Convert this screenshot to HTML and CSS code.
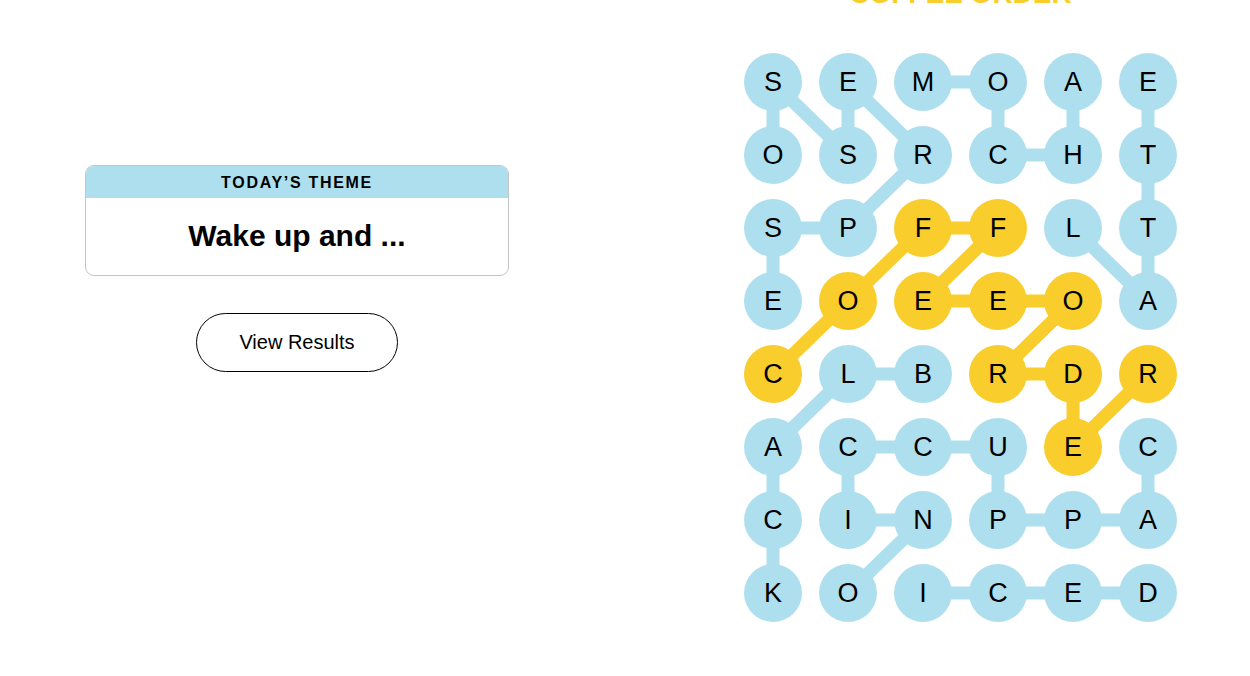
FILE: index.html
```html
<!DOCTYPE html>
<html lang="en">
  <head>
    <meta charset="UTF-8" />
    <meta name="viewport" content="width=device-width, initial-scale=1.0" />
    <title>Strands</title>
    <link rel="stylesheet" href="styles.css">
  </head>
  <body>
    <div class="page">
      <div class="side">
        <div class="theme-card">
          <div class="theme-label">TODAY’S THEME</div>
          <div class="theme-title">Wake up and ...</div>
        </div>
        <button type="button" class="results-btn">View Results</button>
      </div>

      <div class="game">
        <h2 class="spangram">COFFEE ORDER</h2>

        <div class="board">
          <!-- paths of the found words, drawn under the letters -->
          <svg class="paths" width="433" height="569" viewBox="0 0 433 569">
            <g class="path-blue">
              <polyline points="29,248 29,175 104,175 179,102 104,29 104,102 29,29 29,102" />
              <polyline points="179,29 254,29 254,102 329,102 329,29" />
              <polyline points="329,175 404,248 404,175 404,102 404,29" />
              <polyline points="179,321 104,321 29,394 29,467 29,540" />
              <polyline points="404,394 404,467 329,467 254,467 254,394 179,394 104,394 104,467 179,467 104,540" />
              <polyline points="179,540 254,540 329,540 404,540" />
            </g>
            <g class="path-yellow">
              <polyline points="29,321 104,248 179,175 254,175 179,248 254,248 329,248 254,321 329,321 329,394 404,321" />
            </g>
          </svg>

          <div class="cell">S</div>
          <div class="cell">E</div>
          <div class="cell">M</div>
          <div class="cell">O</div>
          <div class="cell">A</div>
          <div class="cell">E</div>

          <div class="cell">O</div>
          <div class="cell">S</div>
          <div class="cell">R</div>
          <div class="cell">C</div>
          <div class="cell">H</div>
          <div class="cell">T</div>

          <div class="cell">S</div>
          <div class="cell">P</div>
          <div class="cell spangram-cell">F</div>
          <div class="cell spangram-cell">F</div>
          <div class="cell">L</div>
          <div class="cell">T</div>

          <div class="cell">E</div>
          <div class="cell spangram-cell">O</div>
          <div class="cell spangram-cell">E</div>
          <div class="cell spangram-cell">E</div>
          <div class="cell spangram-cell">O</div>
          <div class="cell">A</div>

          <div class="cell spangram-cell">C</div>
          <div class="cell">L</div>
          <div class="cell">B</div>
          <div class="cell spangram-cell">R</div>
          <div class="cell spangram-cell">D</div>
          <div class="cell spangram-cell">R</div>

          <div class="cell">A</div>
          <div class="cell">C</div>
          <div class="cell">C</div>
          <div class="cell">U</div>
          <div class="cell spangram-cell">E</div>
          <div class="cell">C</div>

          <div class="cell">C</div>
          <div class="cell">I</div>
          <div class="cell">N</div>
          <div class="cell">P</div>
          <div class="cell">P</div>
          <div class="cell">A</div>

          <div class="cell">K</div>
          <div class="cell">O</div>
          <div class="cell">I</div>
          <div class="cell">C</div>
          <div class="cell">E</div>
          <div class="cell">D</div>
        </div>
      </div>
    </div>
  </body>
</html>
```

FILE: styles.css
```css
body {
  margin: 0;
  font-family: "Liberation Sans", Arial, sans-serif;
  background: #fff;
  color: #000;
  overflow: hidden;
}
.page {
  display: flex;
  align-items: flex-start;
  gap: 235px;
  padding-left: 85px;
  margin-top: -23px;
}
.side {
  width: 424px;
  padding-top: 188px;
  display: flex;
  flex-direction: column;
  align-items: center;
}
.theme-card {
  width: 100%;
  box-sizing: border-box;
  border: 1px solid #c4c4c4;
  border-radius: 9px;
  overflow: hidden;
}
.theme-label {
  background: #aedfee;
  height: 32px;
  line-height: 34px;
  text-align: center;
  font-size: 16px;
  font-weight: bold;
  letter-spacing: 1.7px;
}
.theme-title {
  height: 77px;
  line-height: 75px;
  text-align: center;
  font-size: 30px;
  font-weight: bold;
}
.results-btn {
  margin-top: 37px;
  width: 202px;
  height: 59px;
  background: #fff;
  border: 1.5px solid #000;
  border-radius: 30px;
  font-family: inherit;
  font-size: 20px;
  color: #000;
  cursor: pointer;
}
.game {
  width: 433px;
}
.spangram {
  margin: 0;
  height: 34px;
  line-height: 34px;
  text-align: center;
  font-size: 28px;
  font-weight: bold;
  color: #f8cd2c;
}
.board {
  position: relative;
  margin-top: 42px;
  display: grid;
  grid-template-columns: repeat(6, 58px);
  grid-auto-rows: 58px;
  column-gap: 17px;
  row-gap: 15px;
}
.paths {
  position: absolute;
  top: 0;
  left: 0;
}
.paths polyline {
  fill: none;
  stroke-width: 13;
  stroke-linejoin: round;
}
.path-blue polyline {
  stroke: #aedfee;
}
.path-yellow polyline {
  stroke: #f8cd2c;
}
.cell {
  position: relative;
  width: 58px;
  height: 58px;
  border-radius: 50%;
  background: #aedfee;
  display: flex;
  align-items: center;
  justify-content: center;
  font-size: 27px;
  line-height: 1;
}
.cell.spangram-cell {
  background: #f8cd2c;
}
```
